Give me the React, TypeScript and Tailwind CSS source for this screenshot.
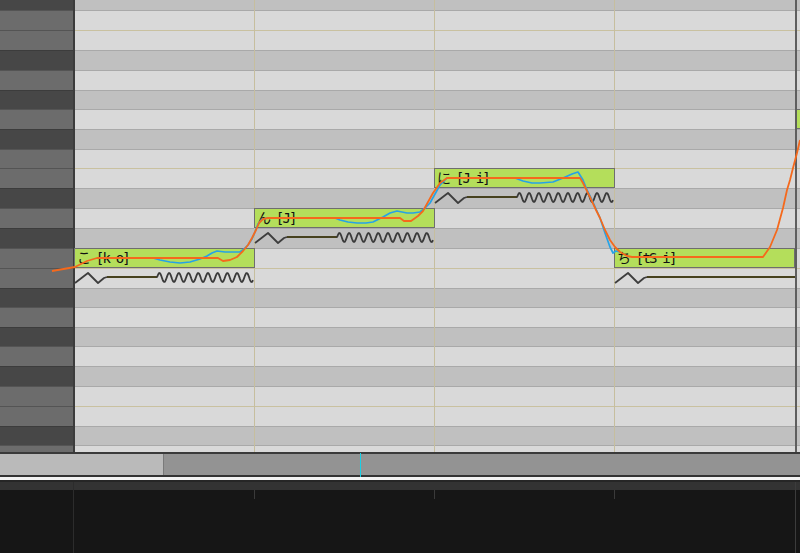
import React from "react";

type Row = { h: string; black: boolean; tan?: boolean };

// pitch rows from top (C# partial) down to D, heights snap to the 19.77px grid
const rows: Row[] = [
  { h: "h-[10px]", black: true },
  { h: "h-[20px]", black: false },
  { h: "h-[20px]", black: false, tan: true },
  { h: "h-[20px]", black: true },
  { h: "h-[20px]", black: false },
  { h: "h-[19px]", black: true },
  { h: "h-[20px]", black: false },
  { h: "h-[20px]", black: true },
  { h: "h-[19px]", black: false },
  { h: "h-[20px]", black: false, tan: true },
  { h: "h-[20px]", black: true },
  { h: "h-[20px]", black: false },
  { h: "h-[20px]", black: true },
  { h: "h-[20px]", black: false },
  { h: "h-[20px]", black: false, tan: true },
  { h: "h-[19px]", black: true },
  { h: "h-[20px]", black: false },
  { h: "h-[19px]", black: true },
  { h: "h-[20px]", black: false },
  { h: "h-[20px]", black: true },
  { h: "h-[20px]", black: false },
  { h: "h-[20px]", black: false, tan: true },
  { h: "h-[19px]", black: true },
  { h: "h-[7px]", black: false },
];

const notes = [
  { pos: "left-[74px] top-[248px]", label: "こ [k o]" },
  { pos: "left-[254px] top-[208px]", label: "ん [J]" },
  { pos: "left-[434px] top-[168px]", label: "に [J i]" },
  { pos: "left-[614px] top-[248px]", label: "ち [tS i]" },
];

const pts = (p: number[][]) => p.map(([x, y]) => `${x},${y}`).join(" ");

const orange = [
  [52, 271], [75, 267], [87, 261], [97, 258], [218, 258], [223, 261], [230, 260],
  [237, 257], [243, 251], [248, 245], [252, 238], [256, 230], [259, 223], [263, 219],
  [268, 218], [400, 218], [404, 221], [411, 221], [418, 216], [423, 211], [428, 202],
  [433, 193], [440, 183], [447, 178], [580, 178], [583, 183], [590, 197], [596, 210],
  [600, 218], [605, 230], [610, 240], [615, 247], [620, 252], [627, 256], [632, 257],
  [763, 257], [770, 247], [777, 230], [783, 208], [787, 190], [790, 180], [793, 168],
  [797, 153], [800, 140],
];

const blue = [
  [153, 258], [160, 260], [170, 262], [180, 263], [190, 262], [200, 259], [207, 256],
  [212, 253], [217, 251], [225, 252], [233, 252], [240, 252], [244, 249], [248, 245],
  [252, 239], [255, 232], [258, 224], [262, 219], [268, 218], [335, 218], [340, 220],
  [348, 222], [357, 223], [366, 223], [373, 222], [383, 217], [390, 213], [397, 211],
  [407, 213], [413, 213], [420, 212], [425, 208], [430, 203], [435, 194], [440, 185],
  [447, 178], [515, 178], [523, 181], [532, 183], [540, 183], [553, 182], [563, 178],
  [572, 174], [578, 172], [583, 180], [587, 190], [592, 200], [600, 218], [605, 233],
  [610, 247], [613, 253], [616, 251], [620, 252],
];

const zigzag = (x0: number, top: number) =>
  pts([[x0 + 1, top + 15], [x0 + 14, top + 5], [x0 + 24, top + 15], [x0 + 30, top + 10], [x0 + 33, top + 9]]);

const flat = (x0: number, top: number, x1: number) => pts([[x0 + 33, top + 9], [x1, top + 9]]);

const sine = (x0: number, x1: number, cy: number) => {
  const p: number[][] = [];
  for (let x = x0; x <= x1; x += 0.5) {
    p.push([x, cy - 4.5 * Math.sin(((x - x0) / 9.7) * Math.PI * 2)]);
  }
  return pts(p);
};

const envelopes = [
  { x0: 74, top: 268, vib: true },
  { x0: 254, top: 228, vib: true },
  { x0: 434, top: 188, vib: true },
  { x0: 614, top: 268, vib: false },
];

export default function App() {
  return (
    <div className="w-[800px] h-[553px] bg-[#161616] flex flex-col overflow-hidden">
      <div className="relative h-[452px] shrink-0">
        {rows.map((r, i) => (
          <div key={i} className={`flex ${r.h}`}>
            <div
              className={`w-[73px] ${r.black ? "bg-[#474747]" : "bg-[#6c6c6c]"} ${
                i === 0 ? "" : r.black ? "border-t border-[#3c3c3c]" : "border-t border-[#545454]"
              }`}
            />
            <div className="w-[2px] bg-[#3c3c3c]" />
            <div
              className={`flex-1 ${r.black ? "bg-[#c0c0c0]" : "bg-[#d9d9d9]"} ${
                i === 0 ? "" : r.tan ? "border-t border-[#c9c1a0]" : "border-t border-[#a9a9a9]"
              }`}
            />
          </div>
        ))}

        {/* beat lines */}
        <div className="absolute left-[254px] top-0 h-[452px] w-px bg-[#c6be9e]" />
        <div className="absolute left-[434px] top-0 h-[452px] w-px bg-[#c6be9e]" />
        <div className="absolute left-[614px] top-0 h-[452px] w-px bg-[#c6be9e]" />

        {notes.map((n) => (
          <div
            key={n.label}
            className={`absolute ${n.pos} w-[181px] h-[20px] bg-[#b4de5b] border border-[#6e6e6e] flex items-center pl-[2px] text-[14px] tracking-[-1.8px] leading-none text-[#111] font-['DejaVu_Sans_Mono','Noto_Sans_CJK_JP',monospace] whitespace-pre`}
          >
            {n.label}
          </div>
        ))}
        <div className="absolute left-[796px] top-[109px] w-[6px] h-[20px] bg-[#b4de5b] border-y border-[#6e6e6e]" />

        {/* end marker */}
        <div className="absolute left-[795px] top-0 h-[452px] w-[2px] bg-[#5e5e5e]" />

        <svg className="absolute left-0 top-0 pointer-events-none" width="800" height="452" viewBox="0 0 800 452" fill="none">
          {envelopes.map((e) => (
            <g key={e.x0} strokeWidth="1.8" strokeLinejoin="round">
              <polyline points={zigzag(e.x0, e.top)} stroke="#3e3e3e" />
              <polyline points={flat(e.x0, e.top, e.vib ? e.x0 + 83 : 795)} stroke="#47421f" />
              {e.vib && <polyline points={sine(e.x0 + 83, e.x0 + 179, e.top + 9.5)} stroke="#3a3a3a" />}
            </g>
          ))}
          <polyline points={pts(blue)} stroke="#26a3e6" strokeWidth="1.7" strokeLinejoin="round" />
          <polyline points={pts(orange)} stroke="#f5691c" strokeWidth="1.8" strokeLinejoin="round" />
        </svg>
      </div>

      <div className="relative shrink-0">
        <div className="h-[2px] bg-[#3a3a3a]" />
        <div className="flex h-[21px]">
          <div className="w-[163px] bg-[#bababa]" />
          <div className="w-[1px] bg-[#7a7a7a]" />
          <div className="flex-1 bg-[#939393]" />
        </div>
        <div className="h-[2px] bg-[#333333]" />
        <div className="absolute left-[360px] top-[1px] w-px h-[24px] bg-[#18d0e6]" />
      </div>
      <div className="h-[3px] bg-[#f2f2f2] shrink-0" />
      <div className="h-[2px] bg-[#262626] shrink-0" />

      <div className="relative flex flex-1">
        <div className="w-[73px] flex flex-col">
          <div className="h-[8px] bg-[#333333]" />
          <div className="flex-1 bg-[#161616]" />
        </div>
        <div className="w-px bg-[#2c2c2c]" />
        <div className="relative flex-1 flex flex-col">
          <div className="h-[8px] bg-[#333333]" />
          <div className="relative flex-1 bg-[#161616]">
            <div className="absolute left-[180px] top-0 h-[9px] w-px bg-[#3a3a3a]" />
            <div className="absolute left-[360px] top-0 h-[9px] w-px bg-[#3a3a3a]" />
            <div className="absolute left-[540px] top-0 h-[9px] w-px bg-[#3a3a3a]" />
          </div>
          <div className="absolute left-[721px] top-0 bottom-0 w-px bg-[#3c3c3c]" />
        </div>
      </div>
    </div>
  );
}
